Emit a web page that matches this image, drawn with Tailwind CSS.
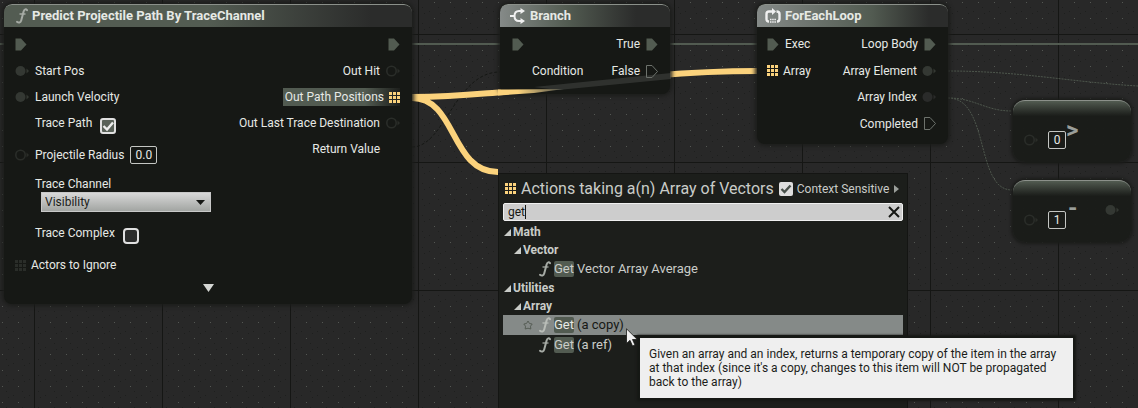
<!DOCTYPE html>
<html lang="en">
<head>
<meta charset="utf-8">
<meta name="viewport" content="width=device-width, initial-scale=1">
<title>Blueprint Graph</title>
<script src="https://cdn.jsdelivr.net/npm/@tailwindcss/browser@4"></script>
</head>
<body class="bg-[#282828] font-['Roboto',sans-serif] text-xs leading-4 text-[#e6e9e5]">

<svg class="hidden" aria-hidden="true">
  <symbol id="exec" viewBox="0 0 12 13"><path d="M0.5 0.5H6L11.5 6.5L6 12.5H0.5Z"/></symbol>
  <symbol id="pin" viewBox="0 0 14 12"><circle cx="5.5" cy="6" r="5"/><path d="M11.5 3.5L14 6L11.5 8.5Z"/></symbol>
  <symbol id="ring" viewBox="0 0 14 12"><circle cx="5.5" cy="6" r="4.7" fill="none" stroke="#2a2d29" stroke-width="1.6"/><path d="M11.5 3.5L14 6L11.5 8.5Z" fill="#2a2d29"/></symbol>
  <symbol id="array" viewBox="0 0 11 11"><path d="M0 0h3v3h-3zM4 0h3v3h-3zM8 0h3v3h-3zM0 4h3v3h-3zM4 4h3v3h-3zM8 4h3v3h-3zM0 8h3v3h-3zM4 8h3v3h-3zM8 8h3v3h-3z"/></symbol>
  <symbol id="tri" viewBox="0 0 7 7"><path d="M7 0V7H0Z"/></symbol>
  <symbol id="func" viewBox="0 0 12 16"><path d="M11 2.200C10 .8 8.300 1 7.600 3.500L5.200 12.500C4.600 14.800 2.600 15.200 1 13.800" fill="none" stroke="currentColor" stroke-width="2" stroke-linecap="round"/><path d="M3.500 6H9.500" stroke="currentColor" stroke-width="1.300"/></symbol>
</svg>

<main class="relative h-screen w-full overflow-hidden">

  <!-- Grid and wires -->
  <svg class="absolute inset-0 h-full w-full" aria-hidden="true">
    <defs>
      <pattern id="dots" x="2" y="2" width="16" height="16" patternUnits="userSpaceOnUse">
        <path d="M0 0h1v1h-1z" fill="#545753"/>
        <path d="M6 11h1v1h-1zM11 9h1v1h-1zM4 5h1v1h-1z" fill="#1e1f1e"/>
      </pattern>
      <pattern id="major" x="34" y="34" width="128" height="128" patternUnits="userSpaceOnUse">
        <path d="M0 0h128v1h-128zM0 0h1v128h-1z" fill="#151614"/>
      </pattern>
    </defs>
    <rect width="100%" height="100%" fill="url(#dots)"/>
    <rect width="100%" height="100%" fill="url(#major)"/>
    <g fill="none">
      <path d="M0 44H1138" stroke="#525b51" stroke-width="2"/>
      <path d="M948 71C1020 71 1070 82 1138 86M948 98C975 98 985 111 1012 111M948 98C990 98 975 190 1012 190" stroke="#4d564c" stroke-dasharray="2 1"/>
      <path d="M412 147C445 147 455 72 500 72" stroke="#151714" stroke-dasharray="3 2"/>
      <path d="M412 97C520 97 620 71 757 71M412 98C457 98 450 172 498 172" stroke="#fbd27c" stroke-width="6"/>
    </g>
  </svg>

  <!-- Predict Projectile Path -->
  <section class="absolute left-1 top-1 h-[300px] w-[408px] overflow-hidden rounded-lg bg-[#161815] shadow-[0_0_4px_2px_#1b1c1a]">
    <header class="flex h-[23px] items-center gap-1 rounded-t-lg border-t border-[#8b908a] bg-linear-to-r from-[#535c52] from-50% to-[#2b2c2b] to-90% pl-3 text-[13px] font-bold">
      <svg class="h-4 w-3 text-[#a6aba5]" aria-hidden="true"><use href="#func"/></svg>
      <h2>Predict Projectile Path By TraceChannel</h2>
    </header>
    <div class="flex justify-between pl-[11px] pr-3 pt-1">
      <div>
        <div class="flex h-[27px] items-center"><svg class="h-[13px] w-3 fill-[#525b51]"><use href="#exec"/></svg></div>
        <div class="flex h-[26px] items-center gap-1.5"><svg class="h-3 w-3.5 fill-[#343833]"><use href="#pin"/></svg>Start Pos</div>
        <div class="flex h-[26px] items-center gap-1.5"><svg class="h-3 w-3.5 fill-[#343833]"><use href="#pin"/></svg>Launch Velocity</div>
        <label class="flex h-[26px] items-center gap-2 pl-5">Trace Path
          <span class="relative mt-1.5 h-4 w-4">
            <input type="checkbox" checked class="block h-4 w-4 appearance-none rounded-[3px] border-2 border-[#e0e0e0] bg-[#596158]">
            <svg class="pointer-events-none absolute inset-0" viewBox="0 0 16 16" fill="none" stroke="#eee" stroke-width="2.4"><path d="M3.5 8L7 11.5L13 4.5"/></svg>
          </span>
        </label>
        <label class="mt-1.5 flex h-[26px] items-center gap-1.5"><svg class="h-3 w-3.5"><use href="#ring"/></svg>Projectile Radius
          <input type="text" value="0.0" class="h-[18px] w-[27px] rounded-xs border border-[#c4c6c3] text-center text-xs">
        </label>
        <div class="mt-2 pl-5">
          <label for="channel" class="block h-4">Trace Channel</label>
          <div class="relative ml-1.5 h-5 w-[170px]">
            <select id="channel" class="h-5 w-full appearance-none border border-[#c8c8c8] bg-linear-to-b from-[#d8d8d8] to-[#a2a5a2] pl-[3px] text-xs leading-4 text-[#1b1d1a]"><option>Visibility</option></select>
            <svg class="pointer-events-none absolute right-1.5 top-2 h-[5px] w-[9px]" viewBox="0 0 9 5"><path d="M0 0H9L4.5 5Z" fill="#161815"/></svg>
          </div>
        </div>
        <label class="mt-2 flex h-[26px] items-center gap-2 pl-5">Trace Complex
          <input type="checkbox" class="mt-1.5 h-4 w-4 appearance-none rounded-sm border-2 border-[#e0e0e0] bg-[#2b2c2b]">
        </label>
        <div class="mt-1.5 flex h-[26px] items-center gap-[5px]"><svg class="h-[11px] w-[11px] fill-[#2a2d29]"><use href="#array"/></svg>Actors to Ignore</div>
      </div>
      <div class="flex flex-col items-end">
        <div class="flex h-[27px] items-center"><svg class="h-[13px] w-3 fill-[#525b51]"><use href="#exec"/></svg></div>
        <div class="flex h-[26px] items-center gap-1.5">Out Hit<svg class="h-3 w-3.5"><use href="#ring"/></svg></div>
        <div class="flex h-[26px] items-center"><span class="flex h-[18px] items-center gap-[5px] bg-linear-to-r from-[#525b51] from-70% to-[#1d1f1c] pl-0.5">Out Path Positions<svg class="h-[11px] w-[11px] fill-[#fbd27c]"><use href="#array"/></svg></span></div>
        <div class="flex h-[26px] items-center gap-1.5">Out Last Trace Destination<svg class="h-3 w-3.5"><use href="#ring"/></svg></div>
        <div class="flex h-[26px] items-center pr-5">Return Value</div>
      </div>
    </div>
    <button aria-label="Show advanced" class="mx-auto mt-1.5 block h-2 w-[11px]"><svg class="block h-2 w-[11px]" viewBox="0 0 11 8"><path d="M0 0H11L5.5 8Z" fill="#d4d6d3"/></svg></button>
  </section>

  <!-- Branch -->
  <section class="absolute left-[500px] top-1 h-[90px] w-[170px] overflow-hidden rounded-lg bg-[#161815] shadow-[0_0_4px_2px_#1b1c1a]">
    <header class="flex h-[23px] items-center gap-1 rounded-t-lg border-t border-[#8b908a] bg-linear-to-r from-[#858a88] via-[#525b51] via-40% to-[#2b2c2b] to-80% pl-2.5 text-[13px] font-bold">
      <svg class="h-4 w-4" viewBox="0 0 16 16" fill="none" stroke="#f0f0f0" stroke-width="2"><path d="M0 8H4M11 3H9C5.500 3 4.500 5 4.500 8S5.500 13 9 13H11"/><path d="M10.500 0L15 3L10.500 6ZM10.500 10L15 13L10.500 16Z" fill="#f0f0f0" stroke="none"/></svg>
      <h2>Branch</h2>
    </header>
    <div class="flex justify-between pl-3 pr-3 pt-1">
      <div>
        <div class="flex h-[26px] items-center"><svg class="h-[13px] w-3 fill-[#525b51]"><use href="#exec"/></svg></div>
        <div class="flex h-[28px] items-center pl-5">Condition</div>
      </div>
      <div class="flex flex-col items-end">
        <div class="flex h-[26px] items-center gap-1.5">True<svg class="h-[13px] w-3 fill-[#525b51]"><use href="#exec"/></svg></div>
        <div class="flex h-[28px] items-center gap-1.5">False<svg class="h-[13px] w-3 fill-none stroke-[#6d726c]"><use href="#exec"/></svg></div>
      </div>
    </div>
  </section>

  <!-- Faded wire crossing the Branch node -->
  <svg class="pointer-events-none absolute left-[498px] top-[70px] h-8 w-44" viewBox="0 0 176 32" aria-hidden="true">
    <defs><linearGradient id="fade"><stop offset="0" stop-color="#fbd27c"/><stop offset=".3" stop-color="#fbd27c"/><stop offset="1" stop-color="#4a4e49"/></linearGradient></defs>
    <path d="M36 17L173 3V9L60 20Z" fill="#6a6e69" fill-opacity=".3"/>
    <path d="M0 19.500L66 19L36 23L0 25.500Z" fill="url(#fade)"/>
  </svg>

  <!-- ForEachLoop -->
  <section class="absolute left-[757px] top-1 h-[140px] w-[191px] overflow-hidden rounded-lg bg-[#161815] shadow-[0_0_4px_2px_#1b1c1a]">
    <header class="flex h-[23px] items-center gap-1 rounded-t-lg border-t border-[#8b908a] bg-linear-to-r from-[#858a88] via-[#525b51] via-60% to-[#2b2c2b] to-90% pl-2 text-[13px] font-bold">
      <svg class="h-4 w-4" viewBox="0 0 16 16" fill="none" stroke="#f0f0f0" stroke-width="2.400"><path d="M4 13.500C2 13.500 1.500 12.500 1.500 11V6C1.500 4.200 2.500 3.500 4 3.500H8M11.500 3.500C13.500 3.500 14.500 4.500 14.500 6V11C14.500 12.500 14 13.500 12 13.500"/><path d="M7 0L11 3.500L7 7Z" fill="#f0f0f0" stroke="none"/><path d="M5 11.500H11M5 14H11" stroke-width="1.500" stroke-dasharray="1.500 .7"/></svg>
      <h2>ForEachLoop</h2>
    </header>
    <div class="flex justify-between pl-2.5 pr-3 pt-1">
      <div>
        <div class="flex h-[26px] items-center gap-1.5"><svg class="h-[13px] w-3 fill-[#525b51]"><use href="#exec"/></svg>Exec</div>
        <div class="flex h-[27px] items-center gap-[5px]"><svg class="h-[11px] w-[11px] fill-[#fbd27c]"><use href="#array"/></svg>Array</div>
      </div>
      <div class="flex flex-col items-end">
        <div class="flex h-[26px] items-center gap-1.5">Loop Body<svg class="h-[13px] w-3 fill-[#525b51]"><use href="#exec"/></svg></div>
        <div class="flex h-[27px] items-center gap-[5px]">Array Element<svg class="h-3 w-3.5 fill-[#343833]"><use href="#pin"/></svg></div>
        <div class="flex h-[26px] items-center gap-[5px]">Array Index<svg class="h-3 w-3.5 fill-[#2a2b2a]"><use href="#pin"/></svg></div>
        <div class="flex h-[27px] items-center gap-1.5">Completed<svg class="h-[13px] w-3 fill-none stroke-[#6d726c]"><use href="#exec"/></svg></div>
      </div>
    </div>
  </section>

  <!-- Compact math nodes -->
  <section class="absolute left-[1013px] top-[100px] flex h-[62px] w-[118px] items-center rounded-xl border-t border-[#8b908a] bg-linear-to-b from-[#525b51] to-[#1a1c19] to-25% pl-[11px] shadow-[0_0_3px_2px_#1b1c1a]">
    <svg class="mt-4 h-3 w-3.5"><use href="#ring"/></svg>
    <input type="text" value="0" aria-label="Compare value" class="ml-2.5 mt-4 h-[18px] w-[18px] rounded-xs border border-[#c4c6c3] bg-[#1a1c19] text-center text-xs">
    <h2 class="pb-1 text-2xl leading-5 font-bold text-[#9a9e9a]">&gt;</h2>
  </section>
  <section class="absolute left-[1013px] top-[180px] flex h-[62px] w-[118px] items-center rounded-xl border-t border-[#8b908a] bg-linear-to-b from-[#525b51] to-[#1a1c19] to-25% pl-[11px] pr-3 shadow-[0_0_3px_2px_#1b1c1a]">
    <svg class="mt-4 h-3 w-3.5"><use href="#ring"/></svg>
    <input type="text" value="1" aria-label="Subtract value" class="ml-2.5 mt-4 h-[18px] w-[18px] rounded-xs border border-[#c4c6c3] bg-[#1a1c19] text-center text-xs">
    <h2 class="pb-2 pl-0.5 text-2xl leading-5 font-bold text-[#9a9e9a]">-</h2>
    <svg class="mb-1 ml-auto h-3 w-3.5 fill-[#343833]"><use href="#pin"/></svg>
  </section>

  <!-- Action menu -->
  <section class="absolute bottom-0 left-[498px] top-[173px] w-[410px] border border-b-0 border-[#141513] bg-[#1c1e1b] px-1 text-[#c9ccc8]">
    <div class="flex h-[29px] items-center gap-[5px] pl-0.5">
      <svg class="h-[11px] w-[11px] shrink-0 fill-[#fbd27c]"><use href="#array"/></svg>
      <h2 class="text-base leading-5 whitespace-nowrap">Actions taking a(n) Array of Vectors</h2>
      <label class="flex items-center gap-1 whitespace-nowrap">
        <span class="relative h-3.5 w-3.5">
          <input type="checkbox" checked class="block h-3.5 w-3.5 appearance-none rounded-xs bg-[#dedede]">
          <svg class="pointer-events-none absolute inset-0" viewBox="0 0 14 14" fill="none" stroke="#48504a" stroke-width="2.400"><path d="M2.500 7L5.500 10L11.500 3.500"/></svg>
        </span>
        Context Sensitive
      </label>
      <svg class="h-2 w-[5px]" viewBox="0 0 5 8"><path d="M0 0L5 4L0 8Z" fill="#9a9e9a"/></svg>
    </div>
    <label class="flex h-[18px] items-center rounded-xs border border-[#f0f0f0] bg-[#cdcdcd] pl-1 text-[#161815]">
      <input type="text" value="get" aria-label="Search actions" class="field-sizing-content text-xs outline-none">
      <span class="h-3.5 w-px bg-[#161815]"></span>
      <button aria-label="Clear search" class="ml-auto mr-0.5"><svg class="block h-3 w-3" viewBox="0 0 12 12" stroke="#161815" stroke-width="2"><path d="M1 1L11 11M11 1L1 11"/></svg></button>
    </label>
    <ul class="pt-0.5">
      <li class="flex h-[18px] items-center gap-0.5 pl-px font-bold"><svg class="h-[7px] w-[7px] fill-[#c9ccc8]"><use href="#tri"/></svg>Math</li>
      <li class="flex h-[18px] items-center gap-0.5 pl-[11px] font-bold"><svg class="h-[7px] w-[7px] fill-[#c9ccc8]"><use href="#tri"/></svg>Vector</li>
      <li><button class="flex h-5 w-full items-center pl-9 text-[13px]"><svg class="mr-[3px] h-4 w-3 text-[#a6aba5]" aria-hidden="true"><use href="#func"/></svg><mark class="rounded-xs bg-[#525b51] text-inherit">Get</mark><span class="pl-[3px]">Vector Array Average</span></button></li>
      <li class="flex h-[18px] items-center gap-0.5 pl-px font-bold"><svg class="h-[7px] w-[7px] fill-[#c9ccc8]"><use href="#tri"/></svg>Utilities</li>
      <li class="flex h-[18px] items-center gap-0.5 pl-[11px] font-bold"><svg class="h-[7px] w-[7px] fill-[#c9ccc8]"><use href="#tri"/></svg>Array</li>
      <li><button class="flex h-5 w-full items-center bg-[#858a88] pl-5 text-[13px]"><svg class="mr-1.5 h-2.5 w-2.5" viewBox="0 0 10 10" fill="none" stroke="#565d55"><path d="M5 1L6.500 3.500L9.200 4L7.500 6.200L7.800 9L5 8.200L2.200 9L2.500 6.200L.8 4L3.500 3.500Z"/></svg><svg class="mr-[3px] h-4 w-3 text-[#b9bdb8]" aria-hidden="true"><use href="#func"/></svg><mark class="rounded-xs bg-[#525b51] text-[#e6e9e5]">Get</mark><span class="pl-[3px] text-[#161815]">(a copy)</span></button></li>
      <li><button class="flex h-5 w-full items-center pl-9 text-[13px]"><svg class="mr-[3px] h-4 w-3 text-[#a6aba5]" aria-hidden="true"><use href="#func"/></svg><mark class="rounded-xs bg-[#525b51] text-inherit">Get</mark><span class="pl-[3px]">(a ref)</span></button></li>
    </ul>
  </section>

  <!-- Tooltip and pointer -->
  <div role="tooltip" class="absolute left-[640px] top-[338px] w-[433px] bg-[#efefef] px-[9px] py-[9px] text-xs leading-[14px] text-[#1b1d1a] shadow-[0_0_2px_3px_#161815]">Given an array and an index, returns a temporary copy of the item in the array at that index (since it's a copy, changes to this item will NOT be propagated back to the array)</div>
  <svg class="pointer-events-none absolute left-[626px] top-[328px] h-[19px] w-3" viewBox="0 0 12 19" aria-hidden="true"><path d="M.5 .8V15.500L4 12.300L6.500 18L9 17L6.500 11.500H11.300Z" fill="#f0f0f0" stroke="#161815" stroke-width=".8"/></svg>
</main>
</body>
</html>
